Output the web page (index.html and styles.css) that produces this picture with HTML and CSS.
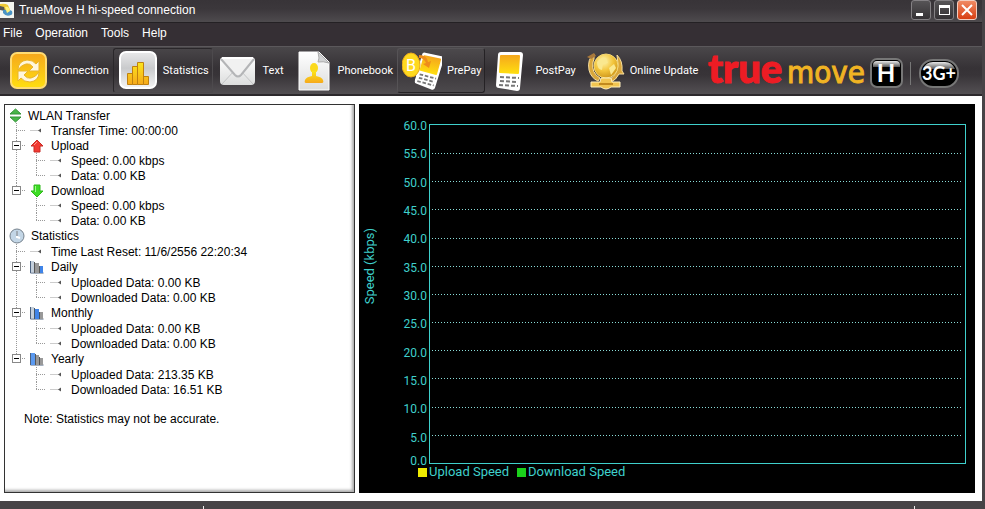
FILE: index.html
```html
<!DOCTYPE html>
<html lang="en">
<head>
  <title>TrueMove H hi-speed connection</title>
  <meta charset="UTF-8">
  <meta name="viewport" content="width=device-width, initial-scale=1">
  <link rel="stylesheet" href="styles.css">
</head>
<body>
  <!-- shared gradients and tree icons -->
  <svg class="defs" width="0" height="0" aria-hidden="true">
    <defs>
      <linearGradient id="gold" x1="0" y1="0" x2="0" y2="1">
        <stop offset="0" stop-color="#f5a71c"/>
        <stop offset="1" stop-color="#ffdf10"/>
      </linearGradient>
      <linearGradient id="sun" x1="0" y1="0" x2="0" y2="1">
        <stop offset="0" stop-color="#fbe51c"/>
        <stop offset="1" stop-color="#f6a91b"/>
      </linearGradient>
      <linearGradient id="silver" x1="0" y1="0" x2="0" y2="1">
        <stop offset="0" stop-color="#e9e9ea"/>
        <stop offset=".45" stop-color="#c9cacc"/>
        <stop offset="1" stop-color="#f4f4f4"/>
      </linearGradient>
      <linearGradient id="paper" x1="0" y1="0" x2="0" y2="1">
        <stop offset="0" stop-color="#fff"/>
        <stop offset="1" stop-color="#dcdddd"/>
      </linearGradient>
      <linearGradient id="gloss" x1="0" y1="0" x2="0" y2="1">
        <stop offset="0" stop-color="#e8e8e8"/>
        <stop offset="1" stop-color="#555"/>
      </linearGradient>
      <radialGradient id="globe" cx=".4" cy=".3" r=".8">
        <stop offset="0" stop-color="#fff6b0"/>
        <stop offset=".5" stop-color="#f3c53c"/>
        <stop offset="1" stop-color="#c58a12"/>
      </radialGradient>
    </defs>
    <symbol id="leaf" viewBox="0 0 13 7">
      <path d="M0 3.5h9" stroke="#ccc" fill="none"/>
      <path d="M8 3.5l3-2v4z" fill="#555"/>
    </symbol>
    <symbol id="up" viewBox="0 0 14 14">
      <path d="M7 1l6 6h-3v6H4V7H1z" fill="#f23a33" stroke="#c82a24"/>
      <path d="M7 3L4 6" stroke="#ff9c90"/>
    </symbol>
    <symbol id="down" viewBox="0 0 14 14">
      <path d="M7 13L1 7h3V1h6v6h3z" fill="#3ddc25" stroke="#2fb91b"/>
      <path d="M5.500 2v6" stroke="#a2f78f"/>
    </symbol>
    <symbol id="phone" viewBox="0 0 28 40">
      <path d="M5 1h19q3 0 3 3l-3 33q0 3-3 3L3 37q-3 0-3-3L2 4q0-3 3-3z" fill="#fff"/>
      <path d="M5 4h18q1 0 1 1l-1 17q0 1-1 1L4 22q-1 0-1-1L4 5q0-1 1-1z" fill="url(#gold)"/>
      <path d="M4 26l19 1M4 30l18 1M3 34l19 1" stroke="#777" stroke-width="2" stroke-dasharray="4 2"/>
    </symbol>
  </svg>

  <div class="window">
    <header class="titlebar">
      <svg class="app-icon" width="14" height="16" viewBox="0 0 14 16" aria-hidden="true">
        <path d="M0 0h14v16H0z" fill="#f4f5ef"/>
        <path d="M0 2q5-1 8 1l2 5H0z" fill="#efc935"/>
        <path d="M0 4l4 1 1 4-5-1z" fill="#555"/>
        <path d="M3 8q6-1 9 1 1 3-1 4-5 2-8-2z" fill="#4b94c4"/>
        <path d="M5 5q4-1 5 4l-3 2z" fill="#fff27a"/>
      </svg>
      <h1 class="title">TrueMove H hi-speed connection</h1>
      <div class="controls">
        <button class="control" type="button" aria-label="Minimize">
          <svg width="18" height="18" viewBox="0 0 18 18"><path d="M4 12h7v3H4z" fill="#fff"/></svg>
        </button>
        <button class="control" type="button" aria-label="Maximize">
          <svg width="18" height="18" viewBox="0 0 18 18"><path d="M4 4h11v10H4zM5 7v6h9V7z" fill="#fff" fill-rule="evenodd"/></svg>
        </button>
        <button class="control close" type="button" aria-label="Close">
          <svg width="18" height="18" viewBox="0 0 18 18"><path d="M4 4l10 10M14 4L4 14" stroke="#fff" stroke-width="2"/></svg>
        </button>
      </div>
    </header>

    <nav class="menubar">
      <a href="#">File</a>
      <a href="#">Operation</a>
      <a href="#">Tools</a>
      <a href="#">Help</a>
    </nav>

    <div class="toolbar">
      <button class="tool" type="button">
        <svg width="40" height="40" viewBox="0 0 40 40">
          <rect x="3" y="2" width="35" height="35" rx="6" fill="url(#gold)" stroke="#ffdc73" stroke-width="2"/>
          <path d="M10 19q0-9 9-10 6 0 9 4l3-3v10H21l4-4q-3-4-7-3-5 1-8 6z" fill="#fff6dc" stroke="#e8b52c"/>
          <path d="M31 21q0 9-9 10-6 0-9-4l-3 3V20h10l-4 4q3 4 7 3 5-1 8-6z" fill="#fff6dc" stroke="#e8b52c"/>
        </svg>
        Connection
      </button>
      <button class="tool pressed" type="button">
        <svg width="40" height="40" viewBox="0 0 40 40">
          <rect x="2" y="1" width="36" height="36" rx="6" fill="url(#silver)" stroke="#fff" stroke-width="2"/>
          <g fill="url(#sun)" stroke="#bf8010">
            <path d="M9.500 22.500h5v11h-5zM14.500 15.500h5v18h-5zM19.500 11.500h6v22h-6zM25.500 25.500h5v8h-5z"/>
          </g>
        </svg>
        Statistics
      </button>
      <button class="tool" type="button">
        <svg width="40" height="40" viewBox="0 0 40 40">
          <rect x="2" y="6" width="35" height="28" rx="4" fill="url(#paper)"/>
          <path d="M4 33l13-14M35 33L22 19" stroke="#c4c5c6" fill="none"/>
          <path d="M3 8l14 16q3 3 6 0L36 8" stroke="#b4b5b7" stroke-width="2" fill="#f1f1f1"/>
          <path d="M4 7h31" stroke="#fff" stroke-width="2"/>
        </svg>
        Text
      </button>
      <button class="tool" type="button">
        <svg width="40" height="40" viewBox="0 0 40 40">
          <path d="M6 1h20l10 10v28H6z" fill="url(#paper)" stroke="#fff"/>
          <path d="M25 1q2 7 0 10 5-1 11 1z" fill="#d1d2d3" stroke="#aaa"/>
          <ellipse cx="21" cy="17" rx="4" ry="5" fill="#fbd91c"/>
          <path d="M19 20h4v5q6 1 7 4 1 3-1 3H13q-2 0-1-3 1-3 7-4z" fill="url(#sun)"/>
        </svg>
        Phonebook
      </button>
      <button class="tool raised" type="button">
        <svg width="40" height="40" viewBox="0 0 40 40">
          <g transform="rotate(12 28 20)"><use href="#phone" x="15" y="1" width="25" height="38"/></g>
          <ellipse cx="9" cy="14" rx="9" ry="12" fill="#ffd91f" stroke="#e9a91c"/>
          <text x="9" y="20" class="coin" text-anchor="middle">B</text>
          <path d="M17 4q8 0 9 7l3-1-2 7-6-4 3-1q-2-5-7-5z" fill="#ee8c1b"/>
        </svg>
        PrePay
      </button>
      <button class="tool" type="button">
        <svg width="40" height="40" viewBox="0 0 40 40">
          <use href="#phone" x="6" y="0" width="28" height="40"/>
        </svg>
        PostPay
      </button>
      <button class="tool" type="button">
        <svg width="40" height="40" viewBox="0 0 40 40">
          <path d="M9 3Q2 8 4 19q2 8 9 11l2-3Q6 22 8 11l1-3zM32 4q6 6 5 16l2 3h-5q-3 6-8 8l-1-3q8-5 8-15z" fill="#d9a63a" stroke="#f8dfa0"/>
          <path d="M2 6l7-4 2 3-5 3z" fill="#a9793b"/>
          <circle cx="21" cy="15" r="12" fill="url(#globe)" stroke="#f5d873"/>
          <path d="M12 11q5-6 9-4l2 5-5 1-1 6q-5-1-5-8zM24 17l5-4 2 4-5 7z" fill="#fae88f"/>
          <path d="M16 27h10l1 4h8v5h-9q-5 4-10 0H6v-5h9z" fill="#f1c551" stroke="#fff0be"/>
          <path d="M14 33h14" stroke="#c1891d" stroke-width="2"/>
        </svg>
        Online Update
      </button>

      <svg class="brand" width="256" height="46" viewBox="0 -3 256 46" role="img" aria-label="truemove H 3G+">
        <text x="0" y="32" class="brand-true">true</text>
        <text x="79" y="32" class="brand-move">move</text>
        <rect x="163" y="8" width="31" height="28" rx="6" fill="#000" stroke="#777" stroke-width="2"/>
        <path d="M165 16v-2q0-4 4-4h19q4 0 4 4v2z" fill="url(#gloss)"/>
        <text x="178" y="31" class="brand-h" text-anchor="middle">H</text>
        <path d="M202.500 11v23" stroke="#777"/>
        <rect x="212" y="9" width="38" height="27" rx="13" fill="#000" stroke="#777" stroke-width="2"/>
        <path d="M215 18q3-7 10-7h12q7 0 10 7z" fill="url(#gloss)"/>
        <text x="231" y="29" class="brand-3g" text-anchor="middle">3G+</text>
      </svg>
    </div>

    <main class="content">
      <section class="panel">
        <ul class="tree">
          <li>
            <div class="row root">
              <svg width="13" height="15" viewBox="0 0 13 15" aria-hidden="true"><path d="M6.500 1L12 6H1zM6.500 14L12 9H1z" fill="#48b648" stroke="#349238"/></svg>
              WLAN Transfer
            </div>
            <ul class="branch">
              <li class="leaf"><div class="row"><svg width="13" height="7" aria-hidden="true"><use href="#leaf"/></svg>Transfer Time: 00:00:00</div></li>
              <li>
                <div class="row"><button class="toggle" type="button" aria-label="Collapse Upload"></button><svg width="14" height="14" aria-hidden="true"><use href="#up"/></svg>Upload</div>
                <ul class="branch">
                  <li class="leaf"><div class="row"><svg width="13" height="7" aria-hidden="true"><use href="#leaf"/></svg>Speed: 0.00 kbps</div></li>
                  <li class="leaf"><div class="row"><svg width="13" height="7" aria-hidden="true"><use href="#leaf"/></svg>Data: 0.00 KB</div></li>
                </ul>
              </li>
              <li>
                <div class="row"><button class="toggle" type="button" aria-label="Collapse Download"></button><svg width="14" height="14" aria-hidden="true"><use href="#down"/></svg>Download</div>
                <ul class="branch">
                  <li class="leaf"><div class="row"><svg width="13" height="7" aria-hidden="true"><use href="#leaf"/></svg>Speed: 0.00 kbps</div></li>
                  <li class="leaf"><div class="row"><svg width="13" height="7" aria-hidden="true"><use href="#leaf"/></svg>Data: 0.00 KB</div></li>
                </ul>
              </li>
            </ul>
          </li>
          <li>
            <div class="row root tall">
              <svg width="16" height="16" viewBox="0 0 16 16" aria-hidden="true">
                <circle cx="8" cy="8" r="7" fill="#c3d6e6" stroke="#75818c"/>
                <path d="M8 3v6l3 1" stroke="#fff" stroke-width="2" fill="none"/>
                <path d="M8 3v5" stroke="#44586b"/>
              </svg>
              Statistics
            </div>
            <ul class="branch">
              <li class="leaf"><div class="row"><svg width="13" height="7" aria-hidden="true"><use href="#leaf"/></svg>Time Last Reset: 11/6/2556 22:20:34</div></li>
              <li>
                <div class="row tall"><button class="toggle" type="button" aria-label="Collapse Daily"></button>
                  <svg width="14" height="14" viewBox="0 0 14 14" aria-hidden="true"><path d="M.500 1v12h13" stroke="#4c6280" fill="none"/><path d="M1 1h3v11H1z" fill="#c4cfdb"/><path d="M5 3h4v10H5z" fill="#999"/><path d="M10 6h3v7h-3z" fill="#3f84e8"/><path d="M4.500 2v11M9.500 6v7" stroke="#555"/></svg>Daily</div>
                <ul class="branch">
                  <li class="leaf"><div class="row"><svg width="13" height="7" aria-hidden="true"><use href="#leaf"/></svg>Uploaded Data: 0.00 KB</div></li>
                  <li class="leaf"><div class="row"><svg width="13" height="7" aria-hidden="true"><use href="#leaf"/></svg>Downloaded Data: 0.00 KB</div></li>
                </ul>
              </li>
              <li>
                <div class="row tall"><button class="toggle" type="button" aria-label="Collapse Monthly"></button>
                  <svg width="14" height="14" viewBox="0 0 14 14" aria-hidden="true"><path d="M.500 1v12h13" stroke="#4c6280" fill="none"/><path d="M1 1h3v11H1z" fill="#c4cfdb"/><path d="M5 3h4v10H5z" fill="#3f84e8"/><path d="M10 6h3v7h-3z" fill="#999"/><path d="M4.500 2v11M9.500 6v7" stroke="#456"/></svg>Monthly</div>
                <ul class="branch">
                  <li class="leaf"><div class="row"><svg width="13" height="7" aria-hidden="true"><use href="#leaf"/></svg>Uploaded Data: 0.00 KB</div></li>
                  <li class="leaf"><div class="row"><svg width="13" height="7" aria-hidden="true"><use href="#leaf"/></svg>Downloaded Data: 0.00 KB</div></li>
                </ul>
              </li>
              <li>
                <div class="row tall"><button class="toggle" type="button" aria-label="Collapse Yearly"></button>
                  <svg width="14" height="14" viewBox="0 0 14 14" aria-hidden="true"><path d="M.500 1v12h13" stroke="#4c6280" fill="none"/><path d="M1 1h4v12H1z" fill="#5b9af0"/><path d="M6 3h3v10H6zM10 6h3v7h-3z" fill="#999"/><path d="M5.500 2v11M9.500 5v8" stroke="#555"/></svg>Yearly</div>
                <ul class="branch">
                  <li class="leaf"><div class="row"><svg width="13" height="7" aria-hidden="true"><use href="#leaf"/></svg>Uploaded Data: 213.35 KB</div></li>
                  <li class="leaf"><div class="row"><svg width="13" height="7" aria-hidden="true"><use href="#leaf"/></svg>Downloaded Data: 16.51 KB</div></li>
                </ul>
              </li>
            </ul>
          </li>
        </ul>
        <p class="note">Note: Statistics may not be accurate.</p>
      </section>

      <section class="chart">
        <div class="axis-title">Speed (kbps)</div>
        <ol class="axis">
          <li>60.0</li>
          <li>55.0</li>
          <li>50.0</li>
          <li>45.0</li>
          <li>40.0</li>
          <li>35.0</li>
          <li>30.0</li>
          <li>25.0</li>
          <li>20.0</li>
          <li>15.0</li>
          <li>10.0</li>
          <li class="last">5.0</li>
          <li class="last zero">0.0</li>
        </ol>
        <div class="plot">
          <i></i><i></i><i></i><i></i><i></i><i></i><i></i><i></i><i></i><i></i><i></i><i></i>
        </div>
        <div class="legend">
          <span class="key upload">Upload Speed</span>
          <span class="key download">Download Speed</span>
        </div>
      </section>
    </main>

    <footer class="statusbar">
      <span></span><span></span><span></span>
    </footer>
  </div>
</body>
</html>
```
FILE: styles.css
```css
* {
  box-sizing: border-box;
}
body {
  background: #fff;
  font-family: "Liberation Sans", Arial, sans-serif;
  font-size: 12px;
  margin: 0;
}
button {
  background: none;
  border: 0;
  font: inherit;
  padding: 0;
}
ul, ol {
  list-style: none;
  margin: 0;
  padding: 0;
}
svg {
  display: block;
  flex: none;
}
.defs {
  position: absolute;
}
.window {
  border-right: 3px solid #474346;
  display: flex;
  flex-direction: column;
  min-height: 100vh;
}

/* TITLE + MENU */
.titlebar {
  align-items: flex-start;
  background: linear-gradient(#383438, #3b373b 40%, #4e4b4e);
  border-bottom: 1px solid #242124;
  display: flex;
  height: 23px;
}
.app-icon {
  margin-top: 2px;
}
.title {
  color: #fff;
  flex: 1;
  font-size: 12px;
  font-weight: normal;
  line-height: 20px;
  margin: 0 0 0 5px;
}
.controls {
  display: flex;
  gap: 3px;
  padding-right: 5px;
}
.control {
  background: linear-gradient(#565456, #353235);
  border: 1px solid #848184;
  border-radius: 3px;
  height: 20px;
  width: 20px;
}
.close {
  background: linear-gradient(#f08a63, #d83f12);
  border-color: #f3cdbf;
}
.menubar {
  background: #352f34;
  display: flex;
  gap: 13px;
  height: 23px;
  line-height: 20px;
  padding-left: 3px;
}
.menubar a {
  color: #fff;
  text-decoration: none;
}

/* TOOLBAR */
.toolbar {
  align-items: center;
  background: linear-gradient(#4a474a, #363236 45%, #383438 60%, #535053);
  border-bottom: 2px solid #2c292c;
  border-top: 1px solid #5b585b;
  display: flex;
  height: 50px;
  padding-left: 3px;
}
.tool {
  align-items: center;
  border: 1px solid transparent;
  border-radius: 3px;
  color: #fff;
  display: flex;
  font-family: Roboto, sans-serif;
  font-size: 11px;
  gap: 5px;
  height: 45px;
  padding: 0 3px 0 4px;
  white-space: nowrap;
}
.pressed {
  border-color: #2a272a #4d4a4d #4d4a4d #2a272a;
}
.raised {
  background: linear-gradient(#4c494c, #3b373b 50%, #4c494c);
  border-color: #565356 #252225 #252225 #565356;
}
.coin {
  fill: #fff;
  font-size: 16px;
}
.brand {
  margin-left: 6px;
}
.brand-true {
  fill: #ed1c24;
  font: 900 40px Lato, sans-serif;
  stroke: #ed1c24;
}
.brand-move {
  fill: #f0b323;
  font: 31px "DejaVu Sans Condensed", "DejaVu Sans", sans-serif;
  stroke: #f0b323;
  stroke-width: 1px;
}
.brand-h {
  fill: #fff;
  font: 700 24px Lato, sans-serif;
}
.brand-3g {
  fill: #fff;
  font: 700 18px Lato, sans-serif;
}

/* CONTENT */
.content {
  display: grid;
  flex: 1;
  gap: 4px;
  grid-template-columns: 351px 1fr;
  padding: 8px 7px 8px 4px;
}
.panel {
  border: 1px solid #333;
  box-shadow: inset -4px -4px 3px -2px #aaa;
  padding: 3px 4px;
}

/* TREE */
.row {
  align-items: center;
  display: flex;
  gap: 7px;
  height: 15px;
  position: relative;
  white-space: nowrap;
}
.tall {
  height: 16px;
}
.root {
  gap: 6px;
}
.branch {
  --dots: repeating-linear-gradient(#999 0 1px, transparent 1px 2px);
  --dash: repeating-linear-gradient(90deg, #999 0 1px, transparent 1px 2px);
  padding-left: 7px;
}
.branch > li {
  background: var(--dots) 0 0 / 1px 100% no-repeat, var(--dash) 0 7px / 10px 1px no-repeat;
  padding-left: 14px;
}
.branch > li:last-child {
  background-size: 1px 8px, 10px 1px;
}
.branch .branch {
  padding-left: 6px;
}
.leaf .row {
  gap: 8px;
}
.toggle {
  background: linear-gradient(#000, #000) center / 5px 1px no-repeat #fff;
  border: 1px solid #888;
  height: 9px;
  left: -18px;
  position: absolute;
  top: 3px;
  width: 9px;
}
.note {
  line-height: 15px;
  margin: 15px 15px 0;
}

/* CHART */
.chart {
  background: #000;
  color: #3fd0cc;
  display: grid;
  font-family: Roboto, sans-serif;
  grid-template-columns: 22px 46px 1fr;
  grid-template-rows: 1fr 16px;
  padding: 20px 9px 13px 0;
}
.axis-title {
  align-self: center;
  font-size: 13px;
  justify-self: center;
  line-height: 14px;
  margin-bottom: 56px;
  transform: rotate(180deg);
  writing-mode: vertical-rl;
}
.axis {
  display: grid;
  grid-template-rows: repeat(12, 1fr);
  line-height: 14px;
  text-align: right;
}
.axis li {
  height: 14px;
  margin-top: -5px;
}
.axis .last {
  grid-area: 12 / 1;
}
.axis .zero {
  align-self: end;
  margin-bottom: -4px;
}
.plot {
  border: 1px solid #3fd0cc;
  display: grid;
  grid-template-rows: repeat(12, 1fr);
  margin-left: 2px;
  padding: 0 2px;
}
.plot i + i {
  background: repeating-linear-gradient(90deg, #8adcd8 0 1px, transparent 1px 3px) 0 0 / 100% 1px no-repeat;
}
.legend {
  display: flex;
  font-size: 13px;
  gap: 8px;
  grid-column: 1 / -1;
  line-height: 16px;
  padding-left: 59px;
}
.key {
  align-items: center;
  display: flex;
  gap: 2px;
}
.key::before {
  background: #eeea00;
  content: "";
  height: 9px;
  width: 9px;
}
.download::before {
  background: #1bd01b;
}

/* STATUS */
.statusbar {
  background: #474447;
  display: grid;
  grid-template-columns: 203px 1fr 68px;
  height: 8px;
  padding-top: 5px;
}
.statusbar span + span {
  border-left: 1px solid #eee;
}
```
